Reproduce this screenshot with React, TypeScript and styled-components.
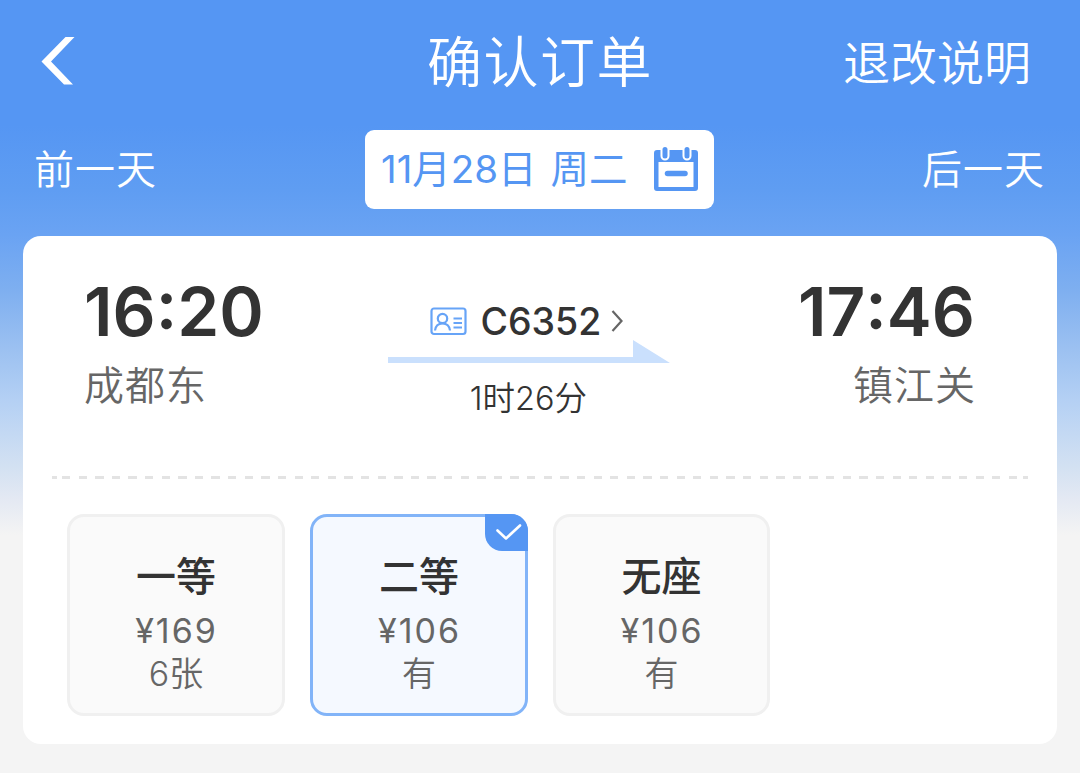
import styled, { createGlobalStyle } from "styled-components";

const GlobalStyle = createGlobalStyle`
  * {
    box-sizing: border-box;
  }
  body {
    margin: 0;
    background-color: #f4f4f4;
    font-family: Inter, "Noto Sans CJK SC", sans-serif;
  }
  button {
    font: inherit;
    color: inherit;
    background: none;
    border: none;
    padding: 0;
  }
`;

const Page = styled.main`
  height: 773px;
  overflow: hidden;
  padding: 0 23px;
  background: linear-gradient(
    180deg,
    #5596f3 0,
    #5596f3 125px,
    #5f9df2 190px,
    #6aa3f3 235px,
    #7eaff0 290px,
    #9cc1f1 350px,
    #b4d0f4 400px,
    #d3e1f2 467px,
    #e4e9f3 500px,
    #f4f4f4 535px
  );
`;

const Header = styled.header`
  display: grid;
  grid-template-columns: 1fr auto 1fr;
  align-items: center;
  height: 122px;
  padding: 0 26px 0 18px;
  color: #fff;
`;

const BackButton = styled.button`
  display: flex;
  justify-self: start;
`;

const Title = styled.h1`
  margin: 2px 0 0 8px;
  font-size: 55px;
  font-weight: 350;
  line-height: 80px;
  letter-spacing: 1.5px;
`;

const RuleLink = styled.button`
  justify-self: end;
  margin-top: 4px;
  font-size: 47px;
  font-weight: 350;
  line-height: 80px;
`;

const DateBar = styled.nav`
  display: flex;
  align-items: center;
  justify-content: space-between;
  height: 114px;
  padding: 0 12px 20px 11px;
  color: #fff;
`;

const DayButton = styled.button`
  margin-top: 2px;
  font-size: 40px;
  font-weight: 350;
  line-height: 60px;
  letter-spacing: 1px;
`;

const DatePicker = styled.button`
  display: flex;
  align-items: center;
  justify-content: space-between;
  width: 349px;
  height: 79px;
  padding: 0 16px;
  border-radius: 9px;
  background-color: #fff;
  color: #5596f3;
  font-size: 38.5px;
  line-height: 60px;
  word-spacing: 3px;
`;

const Card = styled.section`
  height: 508px;
  border-radius: 18px;
  background-color: #fff;
`;

const Trip = styled.div`
  display: flex;
  justify-content: space-between;
  height: 240px;
  padding: 35px 82px 0 61px;
`;

const Station = styled.div<{ $end?: boolean }>`
  display: flex;
  flex-direction: column;
  align-items: ${(props) => (props.$end ? "flex-end" : "flex-start")};
`;

const Time = styled.strong`
  color: #333;
  font-size: 67.5px;
  font-weight: 600;
  line-height: 81px;
  font-kerning: none;
  font-feature-settings: "case";
`;

const StationName = styled.span<{ $end?: boolean }>`
  margin: 4px ${(props) => (props.$end ? "-1px" : 0)} 0 0;
  color: #666;
  font-size: 40px;
  font-weight: 350;
  line-height: 60px;
  letter-spacing: 1px;
`;

const Train = styled.div`
  display: flex;
  flex-direction: column;
  align-items: center;
  margin-right: 3px;
  padding-top: 26px;
  color: #333;
`;

const TrainNumber = styled.button`
  display: flex;
  align-items: center;
  height: 48px;
  margin-right: 5px;
  font-size: 37.5px;
  font-weight: 500;
`;

const TrainCode = styled.span`
  margin: 0 10px 0 13px;
`;

const Arrow = styled.svg`
  display: block;
  margin-top: -5px;
`;

const Duration = styled.span`
  margin: 11px 2px 0 0;
  font-size: 32.5px;
  font-weight: 350;
  line-height: 50px;
`;

const Divider = styled.div`
  height: 3px;
  margin: 0 29px;
  background: linear-gradient(#e3e3e3, #e3e3e3) 0 0 / 5px 3px no-repeat,
    linear-gradient(#e3e3e3, #e3e3e3) 100% 0 / 5px 3px no-repeat,
    repeating-linear-gradient(
        90deg,
        #e3e3e3 0,
        #e3e3e3 8.3px,
        transparent 8.3px,
        transparent 16.61px
      )
      10px 0 / 956px 3px no-repeat;
`;

const SeatList = styled.div`
  display: grid;
  grid-template-columns: 218px 218px 217px;
  gap: 25px;
  padding: 35px 44px 0;
`;

const SeatCard = styled.button<{ $active?: boolean }>`
  position: relative;
  display: flex;
  flex-direction: column;
  align-items: center;
  height: 202px;
  padding-top: 33px;
  border: 3px solid ${(props) => (props.$active ? "#82b4f8" : "#f0f0f0")};
  border-radius: 17px;
  background-color: ${(props) => (props.$active ? "#f5f9ff" : "#fafafa")};
`;

const SeatName = styled.span`
  color: #333;
  font-size: 40px;
  font-weight: 500;
  line-height: 54px;
`;

const SeatText = styled.span`
  color: #666;
  font-size: 34px;
  font-weight: 350;
  line-height: 43px;
`;

const Price = styled(SeatText)`
  margin-top: 5px;
  padding-left: 1px;
  font-weight: 400;
  letter-spacing: 2px;
  font-kerning: none;
`;

const Badge = styled.span`
  position: absolute;
  top: -3px;
  right: -3px;
  display: flex;
  width: 43px;
  height: 37px;
  border-radius: 0 17px 0 17px;
  background-color: #5596f3;
`;

interface IStop {
  time: string;
  name: string;
  end?: boolean;
}

const Stop = ({ time, name, end }: IStop) => {
  return (
    <Station $end={end}>
      <Time>{time}</Time>
      <StationName $end={end}>{name}</StationName>
    </Station>
  );
};

interface ISeat {
  name: string;
  price: string;
  left: string;
}

const seats: ISeat[] = [
  { name: "一等", price: "¥169", left: "6张" },
  { name: "二等", price: "¥106", left: "有" },
  { name: "无座", price: "¥106", left: "有" },
];

interface ISeatProps {
  seat: ISeat;
  active: boolean;
}

const Seat = ({ seat, active }: ISeatProps) => {
  return (
    <SeatCard $active={active}>
      <SeatName>{seat.name}</SeatName>
      <Price>{seat.price}</Price>
      <SeatText>{seat.left}</SeatText>
      {active && (
        <Badge>
          <svg width="43" height="37" fill="none">
            <path
              d="M12.5 16.5L21 24.5L35 11.5"
              stroke="#fff"
              strokeWidth="2.6"
              strokeLinecap="round"
              strokeLinejoin="round"
            />
          </svg>
        </Badge>
      )}
    </SeatCard>
  );
};

function App() {
  return (
    <Page>
      <GlobalStyle />
      <Header>
        <BackButton>
          <svg width="34" height="48" fill="none">
            <path d="M24.5 0H33.5L10 24.5L32 47.5H23L0.5 24.5z" fill="#fff" />
          </svg>
        </BackButton>
        <Title>确认订单</Title>
        <RuleLink>退改说明</RuleLink>
      </Header>
      <DateBar>
        <DayButton>前一天</DayButton>
        <DatePicker>
          <span>11月28日 周二</span>
          <svg width="44" height="44" fill="none">
            <path
              fillRule="evenodd"
              d="M3 3H41Q44 3 44 6V41Q44 44 41 44H3Q0 44 0 41V6Q0 3 3 3ZM4.5 15V40H39.5V15Z"
              fill="#5596f3"
            />
            <path d="M11 0V9M33 0V9" stroke="#fff" strokeWidth="9" strokeLinecap="round" />
            <path d="M11 2.5V9M33 2.5V9" stroke="#5596f3" strokeWidth="5" strokeLinecap="round" />
            <path d="M13.5 26.5H31" stroke="#5596f3" strokeWidth="5.5" strokeLinecap="round" />
          </svg>
        </DatePicker>
        <DayButton>后一天</DayButton>
      </DateBar>
      <Card>
        <Trip>
          <Stop time="16:20" name="成都东" />
          <Train>
            <TrainNumber>
              <svg width="37" height="29" fill="none" stroke="#67a4f7" strokeWidth="2.2">
                <rect x="1.5" y="1.5" width="34" height="25.5" rx="2.5" />
                <circle cx="12.5" cy="11.5" r="4.7" />
                <path d="M5 23.5C5.5 19 8 16.5 12.5 16.5S19.5 19 20 23.5M23.5 11.5H32M23.5 16H32M23.5 20.5H32" />
              </svg>
              <TrainCode>C6352</TrainCode>
              <svg width="12" height="22" fill="none">
                <path d="M1.5 1L10.5 11L1.5 21" stroke="#666" strokeWidth="2.2" />
              </svg>
            </TrainNumber>
            <Arrow width="282" height="23">
              <path d="M0 17H245V0L282 23H0z" fill="#cae0fd" />
            </Arrow>
            <Duration>1时26分</Duration>
          </Train>
          <Stop time="17:46" name="镇江关" end />
        </Trip>
        <Divider />
        <SeatList>
          {seats.map((seat) => (
            <Seat key={seat.name} seat={seat} active={seat.name === "二等"} />
          ))}
        </SeatList>
      </Card>
    </Page>
  );
}

export default App;
